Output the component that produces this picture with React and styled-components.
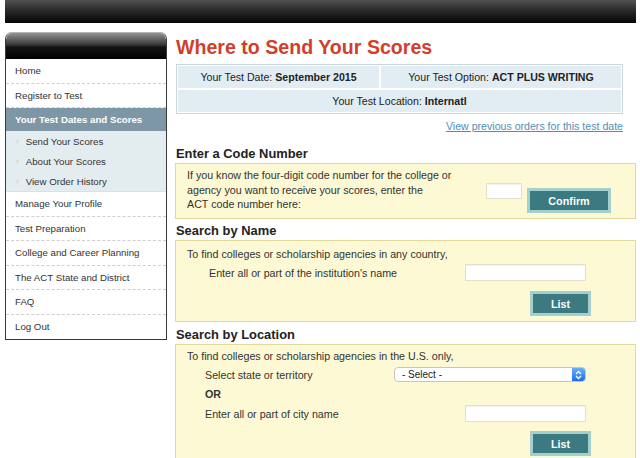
import React from "react";
import styled, { createGlobalStyle } from "styled-components";

const GlobalStyle = createGlobalStyle`
  html, body { margin: 0; padding: 0; background: #ffffff; }
  body { font-family: "Liberation Sans", Arial, Helvetica, sans-serif; color: #333; }
  * { box-sizing: border-box; }
`;

const Page = styled.div`
  width: 640px;
  padding: 0 4px 0 5px;
`;

const TopBar = styled.div`
  height: 23px;
  background: linear-gradient(to bottom, #525252 0%, #2a2a2a 45%, #050505 100%);
`;

const Columns = styled.div`
  display: flex;
  align-items: flex-start;
  gap: 8px;
`;

const Sidebar = styled.nav`
  width: 162px;
  margin-top: 9px;
  border: 1px solid #3a3a3a;
  border-top: none;
  border-radius: 7px 7px 0 0;
  overflow: hidden;
  background: #fff;
`;

const SideHeader = styled.div`
  height: 27px;
  border-radius: 7px 7px 0 0;
  background: linear-gradient(to bottom, #9a9a9a 0%, #6c6c6c 22%, #3a3a3a 46%, #141414 56%, #000 100%);
  box-shadow: inset 0 1px 0 #b5b5b5;
`;

const NavItem = styled.div`
  height: ${(p) => (p.$active ? "23px" : "24.5px")};
  display: flex;
  align-items: center;
  padding-left: 9px;
  font-size: 9.7px;
  color: ${(p) => (p.$active ? "#fff" : "#333")};
  font-weight: ${(p) => (p.$active ? "bold" : "normal")};
  background: ${(p) => (p.$active ? "#7e97a7" : "#fff")};
  border-bottom: ${(p) => (p.$last || p.$active ? "none" : "1px dashed #cfcfcf")};
`;

const SubList = styled.div`
  background: #e3edf0;
  border-bottom: 1px solid #d6e2e6;
`;

const SubItem = styled.div`
  height: 20px;
  display: flex;
  align-items: center;
  padding-left: 10px;
  font-size: 9.7px;
  color: #333;
  gap: 7px;
`;

const Bullet = styled.span`
  color: #b9c3c6;
  font-size: 8px;
`;

const Main = styled.main`
  width: 461px;
  display: flex;
  flex-direction: column;
`;

const Title = styled.h1`
  margin: 13px 0 0 1px;
  font-size: 19.6px;
  line-height: 22px;
  font-weight: bold;
  color: #d13e2c;
`;

const InfoTable = styled.div`
  margin-top: 6px;
  margin-left: 1px;
  width: 447px;
  border: 1px solid #c9d6dc;
  padding: 1px;
  display: grid;
  grid-template-columns: 201px 1fr;
  gap: 2px;
  background: #fff;
`;

const InfoCell = styled.div`
  height: 22px;
  display: flex;
  align-items: center;
  justify-content: center;
  background: #e1edf2;
  font-size: 10.6px;
  color: #222;
  grid-column: ${(p) => (p.$wide ? "1 / span 2" : "auto")};
  b { margin-left: 3px; }
`;

const LinkRow = styled.div`
  margin-top: 4px;
  width: 448px;
  text-align: right;
  line-height: 14px;
`;

const TextLink = styled.a`
  font-size: 10.6px;
  color: #4f8fb6;
  text-decoration: underline;
`;

const Heading = styled.h2`
  margin: ${(p) => p.$mt || 4}px 0 0 1px;
  font-size: 12.9px;
  line-height: 16px;
  font-weight: bold;
  color: #222;
`;

const Panel = styled.div`
  margin-top: 1px;
  border: 1px solid #e2d99c;
  background: #fdf9d4;
  font-size: 10.7px;
  color: #333;
  padding: ${(p) => p.$pad};
`;

const CodeRow = styled.div`
  display: flex;
  align-items: flex-start;
`;

const CodeText = styled.div`
  flex: 1;
  line-height: 14.5px;
`;

const TextInput = styled.div`
  width: ${(p) => p.$w}px;
  height: ${(p) => p.$h || 17}px;
  margin-top: ${(p) => p.$mt || 0}px;
  background: #fff;
  border: 1px solid #e4e0cc;
  box-shadow: inset 0 1px 1px rgba(0, 0, 0, 0.06);
`;

const Button = styled.div`
  width: ${(p) => p.$w}px;
  height: 25px;
  margin-top: ${(p) => p.$mt || 0}px;
  margin-left: ${(p) => p.$ml || 0}px;
  border: 3px solid #a3cfcc;
  background: #3b7a80;
  color: #fff;
  font-weight: bold;
  font-size: 10.8px;
  display: flex;
  align-items: center;
  justify-content: center;
`;

const Line = styled.div`
  line-height: 14px;
  margin-top: ${(p) => p.$mt || 0}px;
  padding-left: ${(p) => p.$indent || 0}px;
  font-weight: ${(p) => (p.$bold ? "bold" : "normal")};
`;

const FieldRow = styled.div`
  display: flex;
  align-items: center;
  justify-content: space-between;
  margin-top: ${(p) => p.$mt || 0}px;
  padding-left: ${(p) => p.$indent || 0}px;
  padding-right: 5px;
`;

const ButtonRow = styled.div`
  display: flex;
  justify-content: flex-end;
  margin-top: ${(p) => p.$mt || 0}px;
`;

const Select = styled.div`
  width: 192px;
  height: 15px;
  display: flex;
  align-items: center;
  background: #fff;
  border: 1px solid #c9c6b8;
  border-radius: 4px;
  overflow: hidden;
  font-size: 10px;
  color: #222;
`;

const SelectLabel = styled.span`
  flex: 1;
  padding-left: 7px;
`;

const SelectArrows = styled.span`
  width: 13px;
  height: 100%;
  display: flex;
  align-items: center;
  justify-content: center;
  background: linear-gradient(to bottom, #6aaefc, #1d6fe6);
`;

const menu = [
  "Home",
  "Register to Test",
];
const menu2 = [
  "Manage Your Profile",
  "Test Preparation",
  "College and Career Planning",
  "The ACT State and District",
  "FAQ",
  "Log Out",
];
const subs = ["Send Your Scores", "About Your Scores", "View Order History"];

export default function App() {
  return (
    <Page>
      <GlobalStyle />
      <TopBar />
      <Columns>
        <Sidebar>
          <SideHeader />
          {menu.map((m) => (
            <NavItem key={m}>{m}</NavItem>
          ))}
          <NavItem $active>Your Test Dates and Scores</NavItem>
          <SubList>
            {subs.map((s) => (
              <SubItem key={s}>
                <Bullet>›</Bullet>
                {s}
              </SubItem>
            ))}
          </SubList>
          {menu2.map((m, i) => (
            <NavItem key={m} $last={i === menu2.length - 1}>
              {m}
            </NavItem>
          ))}
        </Sidebar>
        <Main>
          <Title>Where to Send Your Scores</Title>
          <InfoTable>
            <InfoCell>
              Your Test Date: <b>September 2015</b>
            </InfoCell>
            <InfoCell>
              Your Test Option: <b>ACT PLUS WRITING</b>
            </InfoCell>
            <InfoCell $wide>
              Your Test Location: <b>Internatl</b>
            </InfoCell>
          </InfoTable>
          <LinkRow>
            <TextLink href="#">View previous orders for this test date</TextLink>
          </LinkRow>

          <Heading $mt={13}>Enter a Code Number</Heading>
          <Panel $pad="4px 24px 5px 11px">
            <CodeRow>
              <CodeText>
                If you know the four-digit code number for the college or
                <br />
                agency you want to receive your scores, enter the
                <br />
                ACT code number here:
              </CodeText>
              <TextInput $w={36} $h={16} $mt={15} />
              <Button $w={84} $mt={20} $ml={5}>
                Confirm
              </Button>
            </CodeRow>
          </Panel>

          <Heading $mt={4}>Search by Name</Heading>
          <Panel $pad="6px 44px 5px 11px">
            <Line>To find colleges or scholarship agencies in any country,</Line>
            <FieldRow $mt={3} $indent={22}>
              <span>Enter all or part of the institution's name</span>
              <TextInput $w={121} $h={17} />
            </FieldRow>
            <ButtonRow $mt={10}>
              <Button $w={61}>List</Button>
            </ButtonRow>
          </Panel>

          <Heading $mt={5}>Search by Location</Heading>
          <Panel $pad="4px 44px 4px 11px">
            <Line>To find colleges or scholarship agencies in the U.S. only,</Line>
            <FieldRow $mt={4} $indent={18}>
              <span>Select state or territory</span>
              <Select>
                <SelectLabel>- Select -</SelectLabel>
                <SelectArrows>
                  <svg width="7" height="10" viewBox="0 0 7 10">
                    <path d="M1 4 L3.5 1.5 L6 4" fill="none" stroke="#fff" strokeWidth="1.3" />
                    <path d="M1 6 L3.5 8.5 L6 6" fill="none" stroke="#fff" strokeWidth="1.3" />
                  </svg>
                </SelectArrows>
              </Select>
            </FieldRow>
            <Line $mt={5} $indent={18} $bold>
              OR
            </Line>
            <FieldRow $mt={4} $indent={18}>
              <span>Enter all or part of city name</span>
              <TextInput $w={121} $h={17} />
            </FieldRow>
            <ButtonRow $mt={9}>
              <Button $w={61}>List</Button>
            </ButtonRow>
          </Panel>
        </Main>
      </Columns>
    </Page>
  );
}
